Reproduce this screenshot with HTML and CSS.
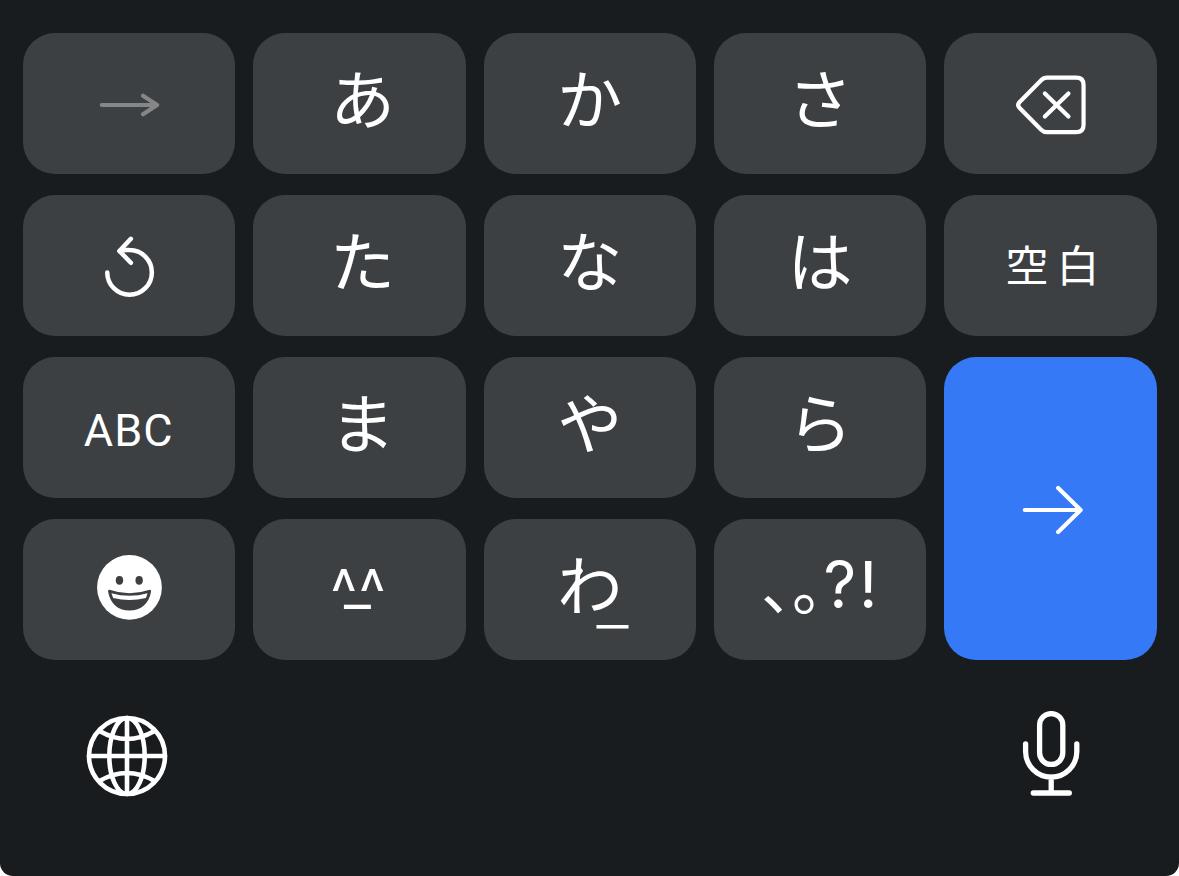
FILE: index.html
```html
<!DOCTYPE html>
<html lang="ja">
<head>
    <meta charset="UTF-8">
    <meta name="viewport" content="width=device-width, initial-scale=1.0">
    <title>キーボード</title>
    <link rel="stylesheet" href="styles.css">
</head>
<body>
    <div class="keyboard">
        <div class="keys">
            <button class="key next" aria-label="次へ">
                <svg viewBox="0 0 212 141"><path d="M78.7 72H133.5M119.8 62.8L134 72L119.8 81.2"/></svg>
            </button>
            <button class="key">あ</button>
            <button class="key">か</button>
            <button class="key">さ</button>
            <button class="key" aria-label="削除">
                <svg viewBox="0 0 212 141">
                    <path d="M103 44.7H132Q139.4 44.7 139.4 52V92Q139.4 99.2 132 99.2H103Q99.5 99.2 97 96.7L75.5 75Q72.5 72 75.5 69L97 47.2Q99.5 44.7 103 44.7Z"/>
                    <path d="M100.7 60.5L124.3 83.5M124.3 60.5L100.7 83.5"/>
                </svg>
            </button>

            <button class="key" aria-label="戻す">
                <svg class="undo" viewBox="0 0 212 141">
                    <path d="M84.1 77.4A22.3 22.3 0 1 0 106.4 55.1Q101 54.6 96.5 56.2"/>
                    <path d="M107.7 43.8L96.3 56L107.7 67.8"/>
                </svg>
            </button>
            <button class="key">た</button>
            <button class="key">な</button>
            <button class="key">は</button>
            <button class="key space">空白</button>

            <button class="key abc">ABC</button>
            <button class="key">ま</button>
            <button class="key">や</button>
            <button class="key">ら</button>
            <button class="key enter" aria-label="確定">
                <svg viewBox="0 0 212 303"><path d="M80.7 153H136.5M114 131L136.5 153L114 175"/></svg>
            </button>

            <button class="key" aria-label="絵文字">
                <svg viewBox="0 0 212 141">
                    <circle class="face" cx="106.3" cy="68.4" r="32.4"/>
                    <ellipse class="hole" cx="96.3" cy="61.3" rx="3.7" ry="4.4"/>
                    <ellipse class="hole" cx="116" cy="61.3" rx="3.7" ry="4.4"/>
                    <path class="hole" d="M86.3 70.8Q106.3 77.8 126.5 70.8Q128.2 70.6 127.9 72.5C126 84.5 118 91.5 106.3 91.5S87 84.5 84.9 72.5Q84.6 70.6 86.3 70.8Z"/>
                    <path class="face" d="M88.2 74.2Q106.3 79.2 124.4 74.2L122.8 79Q106.3 83.2 90 79Z"/>
                </svg>
            </button>
            <button class="key kaomoji"><span class="eyes">^^</span><span class="mouth">_</span></button>
            <button class="key wa">わ<span class="bar">_</span></button>
            <button class="key marks"><span class="ten">、</span><span class="maru">。</span><span class="question">?</span><span class="bang">!</span></button>
        </div>

        <div class="bottom">
            <button class="tool" aria-label="言語">
                <svg class="globe" viewBox="0 0 90 90">
                    <circle cx="45" cy="45" r="38"/>
                    <ellipse cx="45" cy="45" rx="17.7" ry="38"/>
                    <path d="M45 7V83M7 45H83M17.5 20Q45 36 72.5 20M17.5 70Q45 54 72.5 70"/>
                </svg>
            </button>
            <button class="tool" aria-label="音声入力">
                <svg class="mic" viewBox="0 0 90 90">
                    <rect x="33.6" y="2.6" width="23.2" height="50.8" rx="11.6"/>
                    <path d="M19.6 33V40.5A25.6 25.6 0 0 0 70.8 40.5V33M45.2 66V82M27.3 82H63.3"/>
                </svg>
            </button>
        </div>
    </div>
</body>
</html>
```

FILE: styles.css
```css
* {
    box-sizing: border-box;
}
body {
    margin: 0;
    background-color: #fff;
}
.keyboard {
    height: 876px;
    padding: 33px 22.4px 0 23px;
    background-color: #191c1e;
    border-radius: 0 0 13px 13px;
    font-family: Roboto, "Noto Sans CJK JP", sans-serif;
}
.keys {
    display: grid;
    grid-template-columns: repeat(5, 1fr);
    grid-auto-rows: 141px;
    gap: 21px 18px;
}
button {
    border: none;
    padding: 0;
    background: none;
    color: #fff;
    font-family: inherit;
    cursor: pointer;
}
.key {
    display: flex;
    align-items: center;
    justify-content: center;
    min-width: 0;
    background-color: #3d4043;
    border-radius: 32px;
    padding: 0 0 14px;
    font-family: "Noto Sans CJK JP", sans-serif;
    font-size: 65px;
    line-height: 1;
}
.key:nth-child(5n + 2) {
    padding-left: 6px;
}
.key:has(svg) {
    padding: 0;
}
svg {
    display: block;
    width: 100%;
    height: 100%;
    fill: none;
    stroke: #fff;
    stroke-width: 4.2;
    stroke-linecap: round;
    stroke-linejoin: round;
}
.next svg {
    stroke: #858688;
}
.undo {
    stroke-width: 4.5;
}
.face {
    fill: #fff;
    stroke: none;
}
.hole {
    fill: #3d4043;
    stroke: none;
}
.key.space {
    padding: 0 0 5px 12px;
    font-size: 43px;
    letter-spacing: 8px;
}
.key.abc {
    padding: 6px 1px 0 0;
    font-family: Roboto, sans-serif;
    font-size: 45px;
    letter-spacing: 1px;
}
.enter {
    grid-column: 5;
    grid-row: 3 / span 2;
    background-color: #3579f6;
}

/* 顔文字 */
.key.kaomoji {
    position: relative;
    padding: 0;
}
.eyes {
    padding: 0 3px 9px 0;
    font-size: 50px;
    font-weight: 500;
}
.mouth {
    position: absolute;
    left: 90px;
    top: 35px;
    font-size: 50px;
    font-weight: 700;
}
.wa {
    position: relative;
}
.bar {
    position: absolute;
    left: 112px;
    top: 45px;
    font-size: 60px;
}

/* 句読点 */
.key.marks {
    justify-content: flex-start;
    padding: 0 0 0 47px;
    font-size: 62px;
}
.marks span {
    display: block;
    width: 31px;
    padding-bottom: 13px;
}
.marks .question {
    width: 34px;
    padding-bottom: 9px;
    font-family: Inter, sans-serif;
    font-size: 64px;
    font-weight: 400;
}
.marks .bang {
    width: 20px;
    padding: 0 0 9px 2px;
    font-family: Inter, sans-serif;
    font-size: 64px;
    font-weight: 400;
    text-align: center;
}
.bottom {
    display: flex;
    justify-content: space-between;
    padding: 50.5px 61px 0 59.4px;
}
.tool {
    width: 90px;
    height: 90px;
}
.globe {
    stroke-width: 4.6;
}
.mic {
    stroke-width: 5.3;
}
```
